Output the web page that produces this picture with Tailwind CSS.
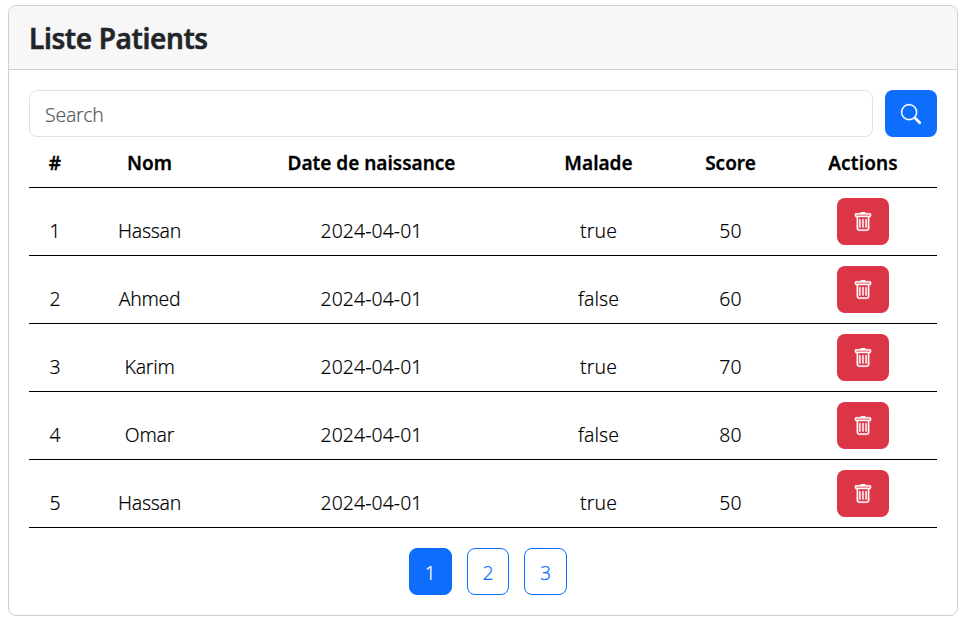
<!DOCTYPE html>
<html lang="fr">
<head>
<meta charset="utf-8">
<title>Liste Patients</title>
<script src="https://cdn.jsdelivr.net/npm/@tailwindcss/browser@4"></script>
</head>
<body class="bg-white font-['Noto_Sans','Open_Sans',sans-serif] text-[19.4px] leading-[30px] text-black [-webkit-text-stroke:0.15px]">
<svg class="hidden">
  <symbol id="trash" viewBox="0 0 16 16"><path d="M5.5 5.5A.5.5 0 0 1 6 6v6a.5.5 0 0 1-1 0V6a.5.5 0 0 1 .5-.5m2.5 0a.5.5 0 0 1 .5.5v6a.5.5 0 0 1-1 0V6a.5.5 0 0 1 .5-.5m3 .5a.5.5 0 0 0-1 0v6a.5.5 0 0 0 1 0z"/><path d="M14.5 3a1 1 0 0 1-1 1H13v9a2 2 0 0 1-2 2H5a2 2 0 0 1-2-2V4h-.5a1 1 0 0 1-1-1V2a1 1 0 0 1 1-1H6a1 1 0 0 1 1-1h2a1 1 0 0 1 1 1h3.5a1 1 0 0 1 1 1zM4.118 4 4 4.059V13a1 1 0 0 0 1 1h6a1 1 0 0 0 1-1V4.059L11.882 4zM2.5 3h11V2h-11z"/></symbol>
</svg>
<div class="mt-[5px] ml-2 w-[950px] h-[611px] rounded-[8px] border border-[#cfcfcf] overflow-hidden">
  <div class="h-16 border-b border-[#cfcfcf] bg-[#f7f7f7] px-5 flex items-center">
    <h1 class="text-[28px] leading-[36px] font-semibold tracking-[-0.4px] text-[#212529] pt-px [-webkit-text-stroke:0.5px]">Liste Patients</h1>
  </div>
  <div class="px-5 pt-5">
    <form class="flex gap-3">
      <input type="text" placeholder="Search" class="h-[47px] w-[844px] rounded-[8px] border border-[#dee2e6] px-[15px] pt-[3px] pb-px font-light tracking-[-0.2px] text-[#212529] placeholder:text-[#595c5f]">
      <button type="button" aria-label="Search" class="h-[47px] w-[52px] rounded-[8px] bg-[#0d6efd] text-white flex items-center justify-center">
        <svg class="size-5 overflow-visible" viewBox="0 0 16 16" fill="currentColor" stroke="currentColor" stroke-width=".2"><path d="M11.742 10.344a6.5 6.5 0 1 0-1.397 1.398h-.001q.044.06.098.115l3.85 3.85a1 1 0 0 0 1.415-1.414l-3.85-3.85a1 1 0 0 0-.115-.1zM12 6.5a5.5 5.5 0 1 1-11 0 5.5 5.5 0 0 1 11 0"/></svg>
      </button>
    </form>
    <table class="w-[908px] table-fixed border-separate border-spacing-0 text-center">
      <colgroup><col class="w-[52px]"><col class="w-[137px]"><col class="w-[307px]"><col class="w-[147px]"><col class="w-[117px]"><col class="w-[148px]"></colgroup>
      <thead>
        <tr class="h-[51px] *:border-b *:border-black *:p-0 *:pt-[2px] *:font-semibold *:text-[19px] *:[-webkit-text-stroke:0.3px]"><th>#</th><th>Nom</th><th>Date de naissance</th><th>Malade</th><th>Score</th><th class="tracking-[0.15px]">Actions</th></tr>
      </thead>
      <tbody id="rows"></tbody>
    </table>
    <nav class="mt-5 flex justify-center gap-[15px] pl-[10px] *:h-[47px] *:w-[42.6px] *:rounded-[8px] *:border *:border-[#0d6efd] *:flex *:items-center *:justify-center *:pt-[3px] *:font-light">
      <a class="bg-[#0d6efd] text-white">1</a><a class="text-[#0d6efd]">2</a><a class="text-[#0d6efd]">3</a>
    </nav>
  </div>
</div>
<script>
  const patients = [
    [1, 'Hassan', '2024-04-01', true, 50],
    [2, 'Ahmed', '2024-04-01', false, 60],
    [3, 'Karim', '2024-04-01', true, 70],
    [4, 'Omar', '2024-04-01', false, 80],
    [5, 'Hassan', '2024-04-01', true, 50],
  ];
  document.getElementById('rows').innerHTML = patients.map(p => `
    <tr class="h-[68px] *:border-b *:border-black *:p-0 *:font-light">
      ${p.map(v => `<td><div class="pt-[19px] ${/^[A-Z]/.test(v) ? 'tracking-[-0.25px]' : 'tracking-[0.1px]'}">${v}</div></td>`).join('')}
      <td><button type="button" aria-label="Delete" class="mx-auto h-[47px] w-[52px] rounded-[8px] bg-[#dc3545] text-white flex items-center justify-center"><svg class="size-5 overflow-visible" fill="currentColor" stroke="currentColor" stroke-width=".3"><use href="#trash"/></svg></button></td>
    </tr>`).join('');
</script>
</body>
</html>
